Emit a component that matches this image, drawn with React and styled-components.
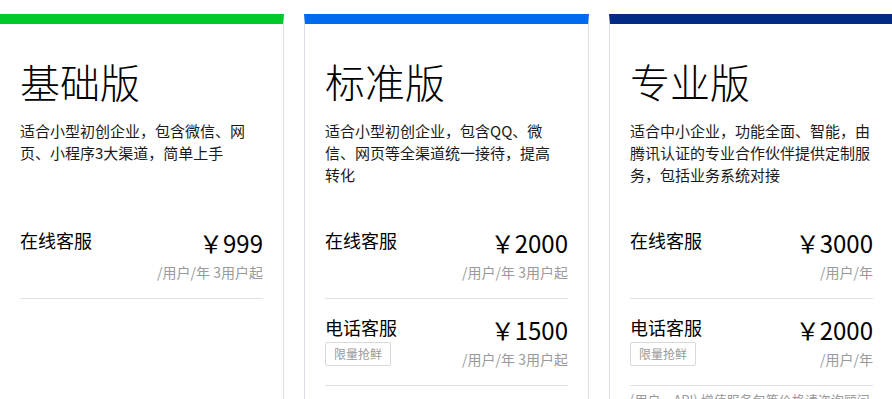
import React from "react";
import styled, { createGlobalStyle } from "styled-components";

const GlobalStyle = createGlobalStyle`
  html, body {
    margin: 0;
    padding: 0;
    background: #fff;
    overflow: hidden;
  }
  body {
    font-family: "Noto Sans CJK SC", "Noto Sans", sans-serif;
    color: #000;
  }
`;

const Row = styled.div`
  display: flex;
  gap: 20px;
  padding-top: 14px;
  margin-left: -1px;
  width: 1200px;
`;

const Card = styled.div`
  flex: 0 0 285px;
  box-sizing: border-box;
  min-height: 460px;
  border: 1px solid #dbe0e8;
  border-top: 10px solid ${(p) => p.accent};
  border-bottom: none;
  padding: 37px 20px 0;
`;

const Title = styled.h2`
  margin: 0;
  font-size: 40px;
  line-height: 40px;
  font-weight: 300;
`;

const Desc = styled.p`
  margin: 19px 0 0;
  font-size: 15px;
  line-height: 22px;
  min-height: 66px;
  color: #1a1a1a;
`;

const Items = styled.div`
  margin-top: 26px;
`;

const Item = styled.div`
  display: flex;
  justify-content: space-between;
  align-items: flex-start;
  padding: 16px 0;
  border-bottom: 1px solid #dde2ea;
`;

const Label = styled.div`
  font-size: 18px;
  line-height: 24px;
`;

const Tag = styled.span`
  display: inline-block;
  margin-top: 3px;
  height: 24px;
  box-sizing: border-box;
  padding: 0 8px;
  border: 1px solid #d9d9d9;
  border-radius: 2px;
  font-size: 12px;
  line-height: 22px;
  color: #999;
`;

const PriceBox = styled.div`
  text-align: right;
`;

const Price = styled.div`
  font-size: 24px;
  line-height: 30px;
  margin-bottom: 4px;
`;

const Unit = styled.div`
  font-size: 14px;
  line-height: 20px;
  color: #9a9a9a;
`;

const Note = styled.p`
  margin: 0;
  padding-top: 4px;
  font-size: 13px;
  line-height: 20px;
  color: #999;
`;

const plans = [
  {
    name: "基础版",
    accent: "#00c92c",
    desc: ["适合小型初创企业，包含微信、网", "页、小程序3大渠道，简单上手"],
    items: [{ label: "在线客服", price: "999", unit: "/用户/年 3用户起" }],
  },
  {
    name: "标准版",
    accent: "#006aee",
    desc: [
      "适合小型初创企业，包含QQ、微",
      "信、网页等全渠道统一接待，提高",
      "转化",
    ],
    items: [
      { label: "在线客服", price: "2000", unit: "/用户/年 3用户起" },
      { label: "电话客服", tag: "限量抢鲜", price: "1500", unit: "/用户/年 3用户起" },
    ],
  },
  {
    name: "专业版",
    accent: "#022b85",
    desc: [
      "适合中小企业，功能全面、智能，由",
      "腾讯认证的专业合作伙伴提供定制服",
      "务，包括业务系统对接",
    ],
    items: [
      { label: "在线客服", price: "3000", unit: "/用户/年" },
      { label: "电话客服", tag: "限量抢鲜", price: "2000", unit: "/用户/年" },
    ],
    note: "(用户、API) 增值服务包等价格请咨询顾问",
  },
];

export default function App() {
  return (
    <>
      <GlobalStyle />
      <Row>
        {plans.map((plan) => (
          <Card key={plan.name} accent={plan.accent}>
            <Title>{plan.name}</Title>
            <Desc>
              {plan.desc.map((line, i) => (
                <React.Fragment key={i}>
                  {line}
                  {i < plan.desc.length - 1 && <br />}
                </React.Fragment>
              ))}
            </Desc>
            <Items>
              {plan.items.map((item) => (
                <Item key={item.label}>
                  <div>
                    <Label>{item.label}</Label>
                    {item.tag && <Tag>{item.tag}</Tag>}
                  </div>
                  <PriceBox>
                    <Price>￥{item.price}</Price>
                    <Unit>{item.unit}</Unit>
                  </PriceBox>
                </Item>
              ))}
            </Items>
            {plan.note && <Note>{plan.note}</Note>}
          </Card>
        ))}
      </Row>
    </>
  );
}
